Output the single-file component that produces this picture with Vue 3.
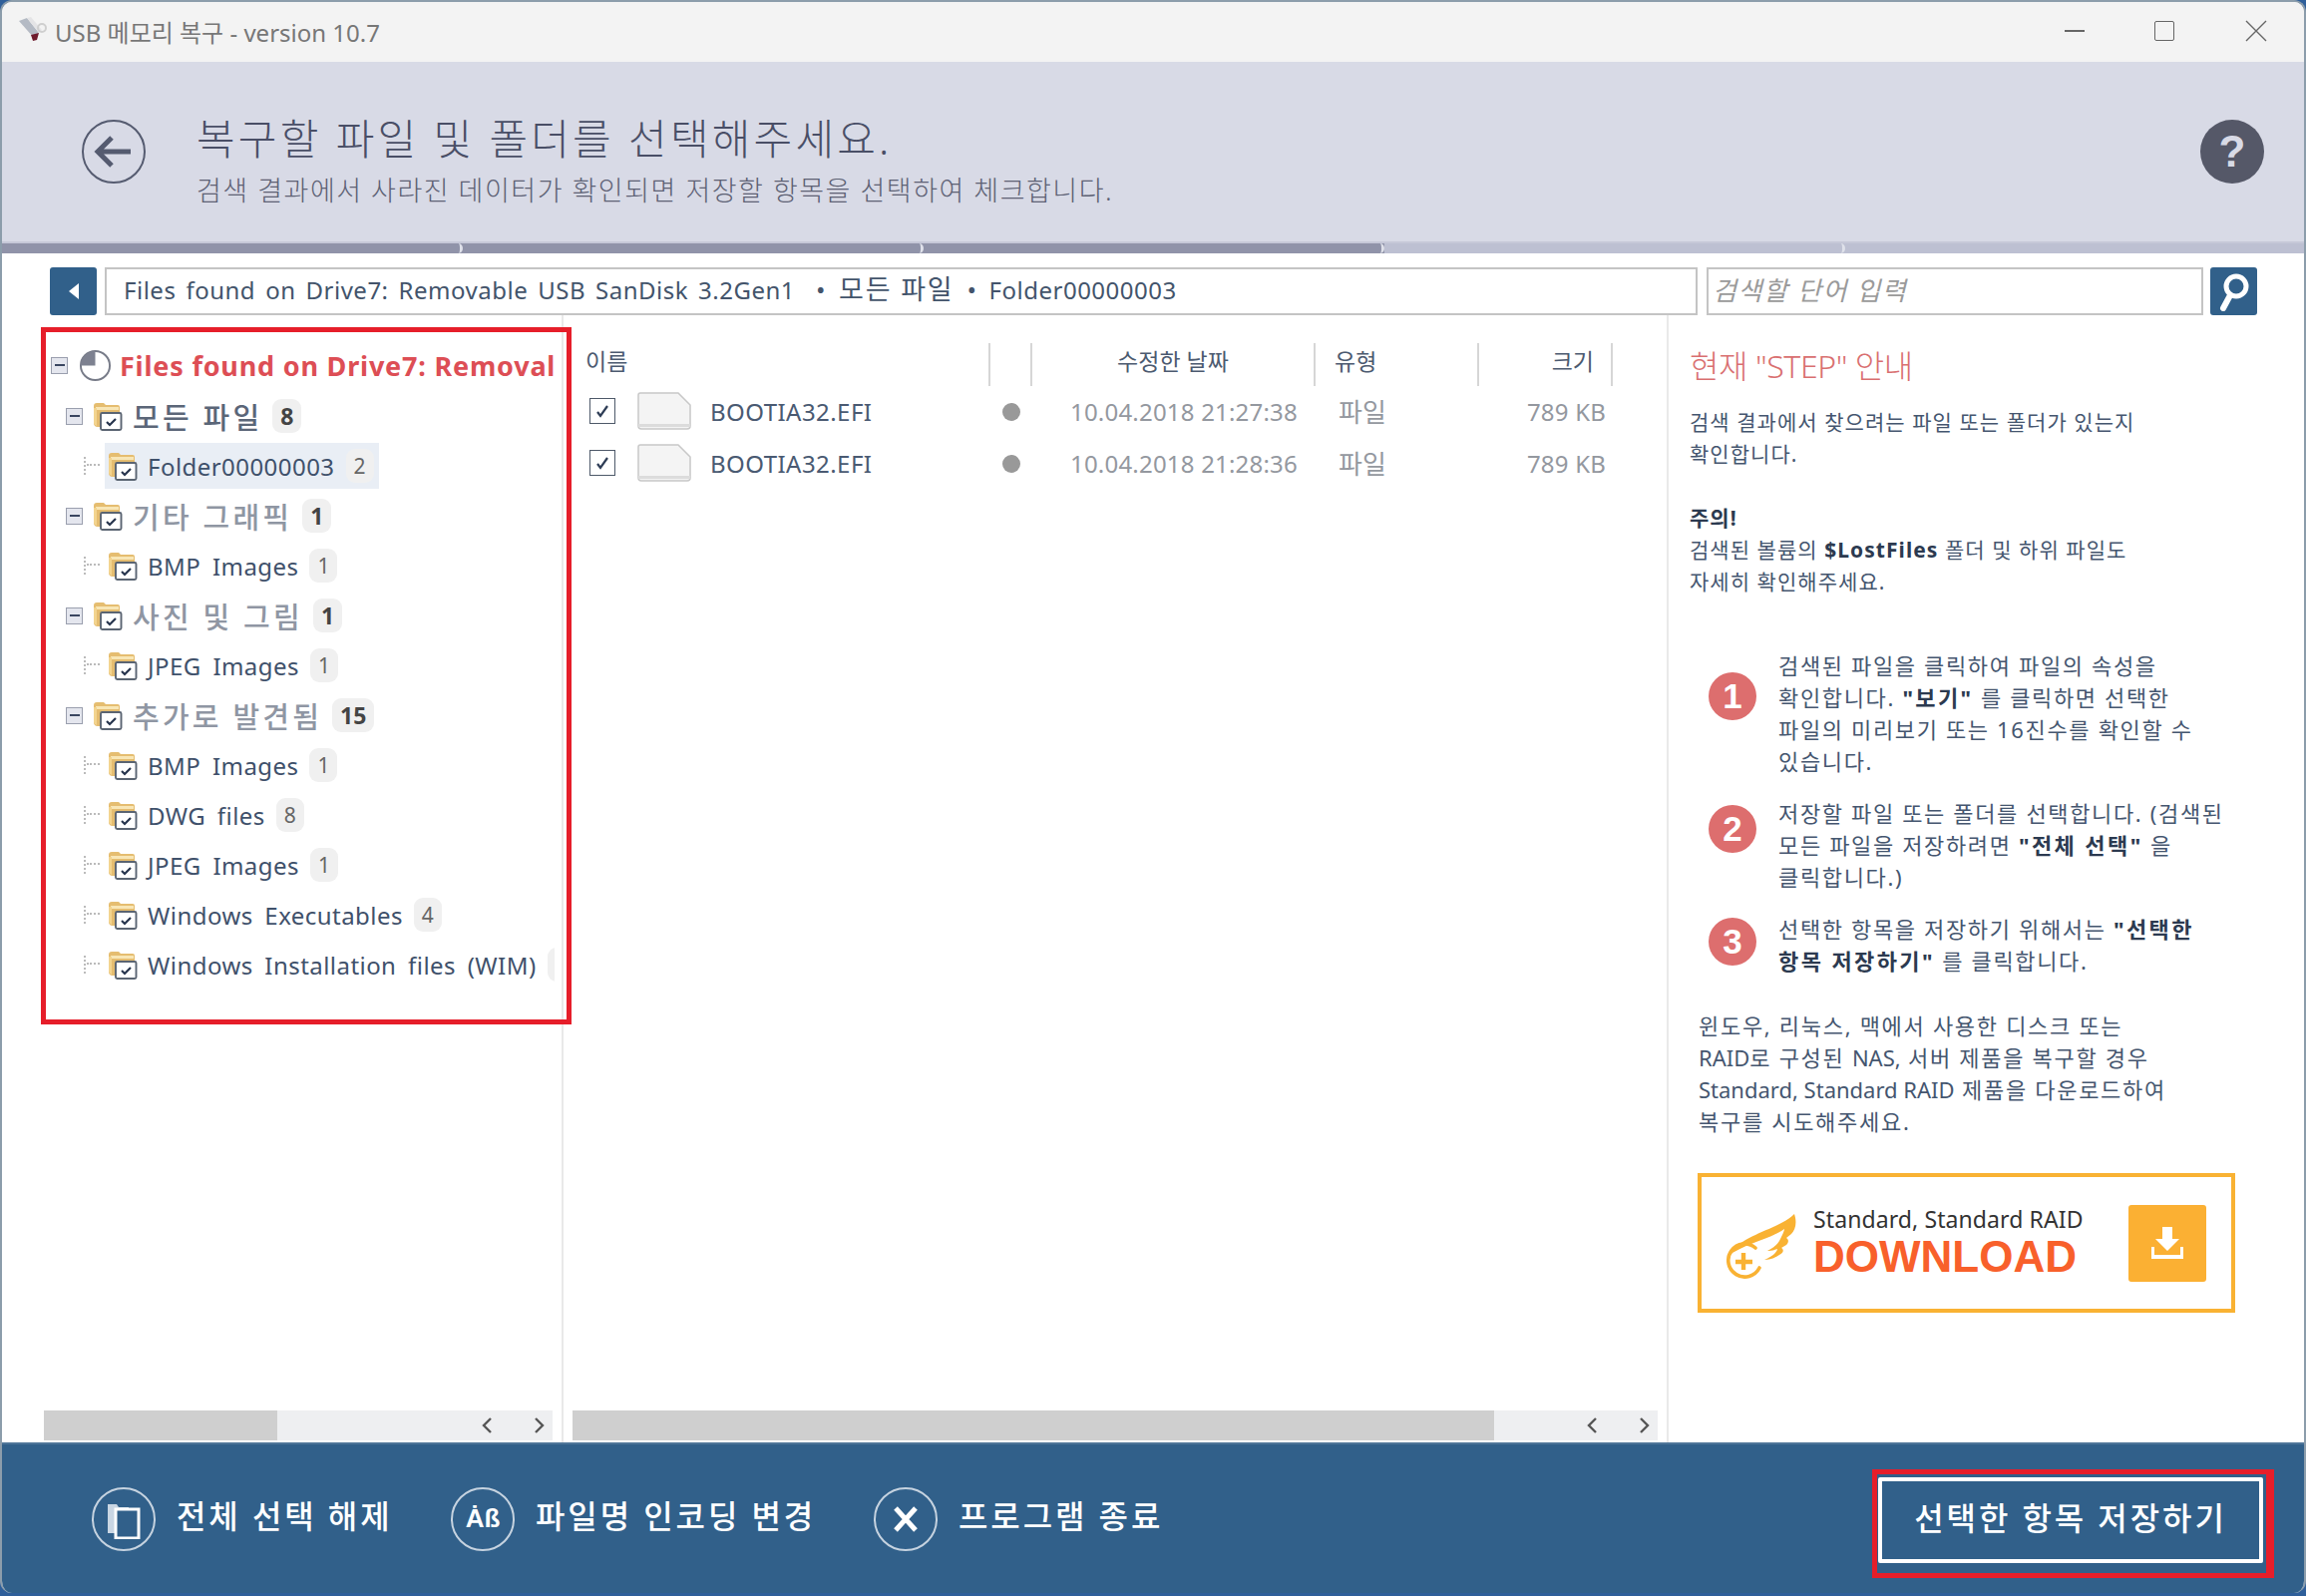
<script setup>
const tree = [
  { level: 1, label: '모든 파일', count: 8, tone: 'dark' },
  { level: 2, label: 'Folder00000003', count: 2, selected: true },
  { level: 1, label: '기타 그래픽', count: 1 },
  { level: 2, label: 'BMP Images', count: 1 },
  { level: 1, label: '사진 및 그림', count: 1 },
  { level: 2, label: 'JPEG Images', count: 1 },
  { level: 1, label: '추가로 발견됨', count: 15 },
  { level: 2, label: 'BMP Images', count: 1 },
  { level: 2, label: 'DWG files', count: 8 },
  { level: 2, label: 'JPEG Images', count: 1 },
  { level: 2, label: 'Windows Executables', count: 4 },
  { level: 2, label: 'Windows Installation files (WIM)', count: 1 }
]
const files = [
  { name: 'BOOTIA32.EFI', date: '10.04.2018 21:27:38', type: '파일', size: '789 KB' },
  { name: 'BOOTIA32.EFI', date: '10.04.2018 21:28:36', type: '파일', size: '789 KB' }
]
const steps = [1, 2, 3]
</script>

<template>
  <div class="window">
    <div class="titlebar">
      <svg class="appicon" width="50" height="50" viewBox="0 0 50 50">
        <path d="M9 14l8-3 12 15-5 5z" fill="#b4bac4" />
        <path d="M17 11l4-1 11 13-3 3z" fill="#e4e4e6" />
        <path d="M21 28l8-2-2 7-4 1z" fill="#6e1a2c" />
        <circle cx="32" cy="21" r="4" fill="none" stroke="#cfcfcf" stroke-width="2" />
      </svg>
      <span class="apptitle">USB 메모리 복구 - version 10.7</span>
      <div class="winctl">
        <i class="min"></i>
        <i class="max"></i>
        <svg width="24" height="22" viewBox="0 0 24 22"><path d="M2 1l20 20M22 1L2 21" stroke="#666" stroke-width="1.4" fill="none" /></svg>
      </div>
    </div>

    <header class="header">
      <div class="round back">
        <svg width="40" height="34" viewBox="0 0 40 34"><path d="M18 3L4 17l14 14M5 17h32" fill="none" stroke="#555b70" stroke-width="5" /></svg>
      </div>
      <div class="heading">
        <h1>복구할 파일 및 폴더를 선택해주세요.</h1>
        <p>검색 결과에서 사라진 데이터가 확인되면 저장할 항목을 선택하여 체크합니다.</p>
      </div>
      <div class="round help">?</div>
    </header>

    <div class="progress">
      <span class="seg done s1"></span><span class="seg done s2"></span><span class="seg done s3"></span><span class="seg s4"></span><span class="seg s5"></span>
    </div>

    <div class="toolbar">
      <div class="navbtn">
        <svg width="14" height="20" viewBox="0 0 14 20"><path d="M12 2v16L2 10z" fill="#fff" /></svg>
      </div>
      <div class="path"><span class="lat">Files found on Drive7: Removable USB SanDisk 3.2Gen1</span><b class="sep first">•</b><span class="ko">모든 파일</span><b class="sep">•</b><span>Folder00000003</span></div>
      <div class="search">검색할 단어 입력</div>
      <div class="navbtn go">
        <svg width="34" height="40" viewBox="0 0 34 40"><circle cx="19" cy="15" r="10" fill="none" stroke="#fff" stroke-width="5" /><path d="M13 24L6 37" stroke="#fff" stroke-width="6" stroke-linecap="round" /></svg>
      </div>
    </div>

    <main class="main">
      <section class="treepanel">
        <div class="mark"></div>
        <div class="tree">
          <div class="node root">
            <span class="exp"></span>
            <svg class="pie" width="33" height="33" viewBox="0 0 34 34">
              <circle cx="17" cy="17" r="15" fill="#fff" stroke="#777b88" stroke-width="2" />
              <path d="M17 17V2A15 15 0 0 0 2 17z" fill="#7d8190" />
            </svg>
            <span class="rootlabel">Files found on Drive7: Removal</span>
          </div>
          <div v-for="(n, i) in tree" :key="i" class="node" :class="'l' + n.level">
            <span v-if="n.level === 1" class="exp"></span>
            <span v-else class="dots"></span>
            <div class="item" :class="{ sel: n.selected }">
              <svg class="folder" width="30" height="30" viewBox="0 0 30 30">
                <path d="M1 5q0-3 3-3h7l2 2h12q2 0 2 2v20H5q-4 0-4-4z" fill="#e5bd70" />
                <path d="M3 6h23v3H3z" fill="#f8e6b5" />
                <path d="M1 7h3v18q-3-1-3-3z" fill="#f3d48f" />
                <rect x="8" y="12" width="20.5" height="17" rx="1.5" fill="#fff" stroke="#5a6472" stroke-width="1.9" />
                <path d="M14 21l3 3 6-6" fill="none" stroke="#26344d" stroke-width="2.2" />
              </svg>
              <span class="label" :class="n.tone">{{ n.label }}</span>
              <span class="count">{{ n.count }}</span>
            </div>
          </div>
        </div>
        <div class="hscroll tree-scroll">
          <span class="thumb"></span>
          <span class="arrows"><svg width="12" height="18" viewBox="0 0 12 18"><path d="M10 2L3 9l7 7" fill="none" stroke="#555" stroke-width="2.4" /></svg><svg width="12" height="18" viewBox="0 0 12 18"><path d="M2 2l7 7-7 7" fill="none" stroke="#555" stroke-width="2.4" /></svg></span>
        </div>
      </section>

      <section class="listpanel">
        <div class="table">
          <div class="thead">
            <span class="th c1">이름</span><span class="th c2"></span><span class="th c3">수정한 날짜</span><span class="th c4">유형</span><span class="th c5">크기</span>
          </div>
          <div v-for="(f, i) in files" :key="i" class="tr">
            <span class="td c1">
              <span class="chk"><svg width="14" height="14" viewBox="0 0 14 14"><path d="M2 8l3 4 7-10" fill="none" stroke="#2d3c55" stroke-width="2.2" /></svg></span>
              <svg class="fileicon" width="54" height="38" viewBox="0 0 54 38">
                <path d="M3 1h38l12 12v21q0 3-3 3H4q-3 0-3-3V3q0-2 2-2z" fill="#f4f4f4" stroke="#c8c8c8" stroke-width="1.5" />
                <path d="M1 32h52v3H1z" fill="#dcdcdc" />
              </svg>
              <span class="fname">{{ f.name }}</span>
            </span>
            <span class="td c2"><i class="dot"></i></span>
            <span class="td c3">{{ f.date }}</span>
            <span class="td c4">{{ f.type }}</span>
            <span class="td c5">{{ f.size }}</span>
          </div>
        </div>
        <div class="hscroll list-scroll">
          <span class="thumb"></span>
          <span class="arrows"><svg width="12" height="18" viewBox="0 0 12 18"><path d="M10 2L3 9l7 7" fill="none" stroke="#555" stroke-width="2.4" /></svg><svg width="12" height="18" viewBox="0 0 12 18"><path d="M2 2l7 7-7 7" fill="none" stroke="#555" stroke-width="2.4" /></svg></span>
        </div>
      </section>

      <aside class="guide">
        <h2>현재 "STEP" 안내</h2>
        <p class="txt">검색 결과에서 찾으려는 파일 또는 폴더가 있는지<br />확인합니다.</p>
        <p class="txt warn"><b>주의!</b><br />검색된 볼륨의 <b>$LostFiles</b> 폴더 및 하위 파일도<br />자세히 확인해주세요.</p>
        <div class="step s-1">
          <span class="num">{{ steps[0] }}</span>
          <p class="txt">검색된 파일을 클릭하여 파일의 속성을<br />확인합니다. <b>"보기"</b> 를 클릭하면 선택한<br />파일의 미리보기 또는 16진수를 확인할 수<br />있습니다.</p>
        </div>
        <div class="step s-2">
          <span class="num">{{ steps[1] }}</span>
          <p class="txt">저장할 파일 또는 폴더를 선택합니다. (검색된<br />모든 파일을 저장하려면 <b>"전체 선택"</b> 을<br />클릭합니다.)</p>
        </div>
        <div class="step s-3">
          <span class="num">{{ steps[2] }}</span>
          <p class="txt">선택한 항목을 저장하기 위해서는 <b>"선택한<br />항목 저장하기"</b> 를 클릭합니다.</p>
        </div>
        <p class="txt para">윈도우, 리눅스, 맥에서 사용한 디스크 또는<br /><span class="nar">RAID</span>로 구성된 <span class="nar">NAS,</span> 서버 제품을 복구할 경우<br /><span class="nar">Standard, Standard RAID</span> 제품을 다운로드하여<br />복구를 시도해주세요.</p>
        <div class="promo">
          <svg class="wing" width="110" height="100" viewBox="0 0 110 100">
            <path d="M45 55A16.500 16.500 0 1 0 49 75" fill="none" stroke="#f9b233" stroke-width="3.600" stroke-linecap="round" />
            <path d="M33 60v17M25 69h17" stroke="#f9b233" stroke-width="4.400" />
            <path d="M17 63C28 46 54 39 71 30c6-3 10-6 13-9 3 9 1 16-3 20l-5 4c3 2 2 5 0 7l-5 3c3 2 2 5-2 7-4 3-9 5-15 5 6-3 12-6 13-11-5 2-7 2-10 2 6-3 11-7 13-12 2-4 4-8 4-10C60 46 36 50 17 63z" fill="#f9b233" />
          </svg>
          <div class="promotxt">
            <span class="ptop">Standard, Standard RAID</span>
            <span class="pbig">DOWNLOAD</span>
          </div>
          <div class="dl">
            <svg width="36" height="36" viewBox="0 0 36 36">
              <path d="M13 2h10v12h7L18 26 6 14h7z" fill="#fff" />
              <path d="M2 22v12h32V22h-3v8H5v-8z" fill="#fff" />
            </svg>
          </div>
        </div>
      </aside>
    </main>

    <footer class="footer">
      <div class="act">
        <span class="ring">
          <svg width="36" height="40" viewBox="0 0 36 40">
            <path d="M2 5h9l2 3h10v26H2z" fill="#c9d6e3" />
            <rect x="10" y="10" width="23" height="29" fill="#31608a" stroke="#fff" stroke-width="3" />
          </svg>
        </span>
        <span class="actlabel">전체 선택 해제</span>
      </div>
      <div class="act a2">
        <span class="ring"><span class="ab">Ȧß</span></span>
        <span class="actlabel">파일명 인코딩 변경</span>
      </div>
      <div class="act a3">
        <span class="ring">
          <svg width="28" height="28" viewBox="0 0 28 28"><path d="M4 3l20 22M24 3L4 25" stroke="#fff" stroke-width="5" /></svg>
        </span>
        <span class="actlabel">프로그램 종료</span>
      </div>
      <button class="save">선택한 항목 저장하기</button>
    </footer>
  </div>
</template>

<style>
html, body { margin: 0; padding: 0; background: #2f5f9a; }
</style>

<style scoped>
* { box-sizing: border-box; }
.window {
  width: 2312px;
  height: 1597px;
  display: flex;
  flex-direction: column;
  background: #fff;
  border: 2px solid #8c9dab;
  border-bottom: 0;
  border-radius: 12px;
  overflow: hidden;
  font-family: "Noto Sans", "Noto Sans CJK KR", sans-serif;
  color: #3f516b;
}
.titlebar {
  height: 60px;
  flex: none;
  display: flex;
  align-items: center;
  background: #f3f3f3;
  padding-left: 8px;
}
.appicon { margin-right: -5px; }
.apptitle { font-size: 24px; color: #777; padding-bottom: 2px; letter-spacing: 0; }
.winctl {
  margin-left: auto;
  display: flex;
  align-items: center;
  gap: 70px;
  padding: 0 36px 2px 0;
}
.min { width: 20px; height: 2px; background: #666; display: block; }
.max { width: 20px; height: 20px; border: 1.5px solid #666; border-radius: 2px; display: block; }

.header {
  height: 180px;
  flex: none;
  display: flex;
  align-items: center;
  background: #d8dae6;
  padding: 0 40px 0 80px;
}
.round {
  width: 64px;
  height: 64px;
  border-radius: 50%;
  flex: none;
  display: flex;
  align-items: center;
  justify-content: center;
}
.back { border: 2px solid #555b70; }
.help {
  margin-left: auto;
  background: #555868;
  color: #d8dae6;
  font: bold 44px "Liberation Sans", sans-serif;
}
.heading { margin-left: 51px; padding-top: 16px; }
h1 {
  margin: 0;
  font-size: 42px;
  line-height: 52px;
  font-weight: 300;
  letter-spacing: 3.2px;
  color: #494e66;
}
.heading p {
  margin: 9px 0 0;
  font-size: 27px;
  line-height: 34px;
  letter-spacing: 1.5px;
  color: #5d6174;
  font-weight: 300;
}

.progress {
  height: 12px;
  flex: none;
  display: flex;
  background: #bdc0d2;
  border-top: 2px solid #c6c8d8;
}
.seg { position: relative; display: block; height: 100%; background: #bdc0d2; }
.seg.done { background: #9093a9; }
.seg::after {
  content: "";
  position: absolute;
  right: 0;
  top: 0;
  bottom: 0;
  width: 6px;
  border-right: 3px solid #dfe1ea;
  border-radius: 0 50% 50% 0;
}
.s1, .s2, .s3, .s4 { width: 462px; }
.s5 { flex: 1; }
.s5::after { display: none; }

.toolbar {
  height: 62px;
  flex: none;
  display: flex;
  align-items: flex-end;
  padding-left: 48px;
  gap: 8px;
}
.navbtn {
  width: 47px;
  height: 48px;
  flex: none;
  background: #31608a;
  border-radius: 3px;
  display: flex;
  align-items: center;
  justify-content: center;
}
.path, .search {
  height: 48px;
  flex: none;
  border: 2px solid #c4c4c4;
  display: flex;
  align-items: center;
  font-size: 24px;
  white-space: pre;
  padding-bottom: 4px;
}
.path { width: 1597px; padding-left: 17px; color: #43546b; letter-spacing: 0.5px; }
.lat { word-spacing: 3.300px; }
.ko { font-size: 27px; line-height: 30px; letter-spacing: 1.8px; margin-left: 2px; }
.sep { font-size: 20px; margin: 0 13px 0 14px; }
.sep.first { margin: 0 12px 0 22px; }
.search { width: 498px; padding-left: 4px; color: #9a9a9a; font-style: italic; margin-left: 1px; font-size: 26px; letter-spacing: 1.6px; }
.go { margin-left: -1px; }

.main { flex: 1; min-height: 0; display: flex; }

.treepanel {
  position: relative;
  width: 563px;
  flex: none;
  display: flex;
  flex-direction: column;
  border-right: 2px solid #e9e9e9;
}
.mark {
  position: absolute;
  left: 39px;
  top: 12px;
  width: 532px;
  height: 699px;
  border: 5px solid #e61e2a;
  z-index: 2;
  pointer-events: none;
}
.tree {
  flex: 1;
  min-height: 0;
  margin-right: 7px;
  padding-top: 26px;
  overflow: hidden;
}
.node {
  height: 50px;
  display: flex;
  align-items: center;
  white-space: nowrap;
}
.root { padding-left: 49px; padding-bottom: 1px; }
.l1 { padding-left: 64px; }
.l2 { padding-left: 82px; }
.exp {
  position: relative;
  width: 17px;
  height: 17px;
  flex: none;
  border: 1.5px solid #9a9fae;
  background: #e4e6ee;
}
.exp::after {
  content: "";
  position: absolute;
  left: 2.5px;
  right: 2.5px;
  top: 6px;
  height: 2px;
  background: #3a4660;
}
.dots {
  position: relative;
  width: 16px;
  height: 18px;
  flex: none;
  border-left: 2px dotted #bbb;
}
.dots::after {
  content: "";
  position: absolute;
  left: 1px;
  right: 0;
  top: 7px;
  border-top: 2px dotted #bbb;
}
.pie { margin-left: 11px; margin-right: 8px; flex: none; }
.rootlabel {
  font-size: 27px;
  font-weight: 700;
  color: #dd4e55;
  letter-spacing: 0.8px;
}
.item {
  display: flex;
  align-items: center;
  height: 46px;
  min-width: 0;
}
.l1 .item { margin-left: 10px; }
.l2 .item { margin-left: 5px; padding: 0 12px 0 3px; }
.item.sel { background: #e9eef5; width: 275px; }
.folder { flex: none; }
.label { color: #3f516b; }
.l1 .label {
  margin-left: 10px;
  font-size: 29px;
  font-weight: 500;
  letter-spacing: 3.2px;
  color: #8f96a3;
}
.l1 .label.dark { color: #5b6678; }
.l2 .label { margin-left: 10px; font-size: 24px; letter-spacing: 0.45px; word-spacing: 5px; }
.count {
  flex: none;
  margin-left: 11px;
  min-width: 25px;
  height: 34px;
  padding: 0 8px;
  border-radius: 9px;
  background: #f0f0f0;
  display: flex;
  align-items: center;
  justify-content: center;
  color: #666;
  font-size: 21px;
}
.l1 .count { margin-left: 10px; font-weight: 700; font-size: 23px; color: #444; }

.hscroll {
  height: 30px;
  flex: none;
  display: flex;
  align-items: stretch;
  background: #eeeff1;
  margin-bottom: 2px;
}
.thumb { display: block; background: #cfcfcf; }
.arrows {
  margin-left: auto;
  display: flex;
  align-items: center;
  gap: 41px;
  padding-right: 7px;
}
.tree-scroll { margin: 0 9px 2px 42px; }
.tree-scroll .thumb { width: 234px; }
.listpanel {
  width: 1108px;
  flex: none;
  display: flex;
  flex-direction: column;
  border-right: 2px solid #e9e9e9;
}
.list-scroll { margin: 0 9px 2px 9px; }
.list-scroll .thumb { width: 924px; }

.table { flex: 1; padding: 28px 0 0 9px; }
.thead, .tr {
  display: grid;
  grid-template-columns: 419px 42px 284px 164px 134px;
}
.thead { height: 43px; }
.th {
  display: flex;
  align-items: center;
  border-right: 2px solid #d6d6d6;
  font-size: 23px;
  color: #4c5a70;
  padding-bottom: 9px;
}
.th.c1 { padding-left: 13px; }
.th.c3 { justify-content: center; }
.th.c4 { padding-left: 19px; }
.th.c5 { justify-content: flex-end; padding-right: 17px; }
.tr { height: 52px; }
.td {
  display: flex;
  align-items: center;
  font-size: 24px;
  letter-spacing: 0.2px;
  color: #94989f;
  white-space: nowrap;
  padding-bottom: 2px;
}
.td.c1 { padding-left: 17px; }
.td.c2 { justify-content: center; padding-bottom: 0; }
.td.c3 { padding-left: 38px; }
.td.c4 { padding-left: 23px; font-size: 26px; }
.td.c5 { justify-content: flex-end; padding-right: 7px; }
.chk {
  width: 26px;
  height: 26px;
  border: 1.5px solid #4e5969;
  display: flex;
  align-items: center;
  justify-content: center;
}
.fileicon { margin-left: 22px; }
.fname { margin-left: 19px; color: #4a5a72; letter-spacing: 0.45px; }
.dot { width: 18px; height: 18px; border-radius: 50%; background: #999; display: block; }

.guide {
  flex: 1;
  padding: 26px 0 0 21px;
  white-space: nowrap;
}
h2 {
  margin: 0 0 15px;
  font-size: 32px;
  line-height: 50px;
  font-weight: 300;
  letter-spacing: -0.4px;
  color: #d96f70;
}
.txt {
  margin: 0;
  font-size: 21px;
  line-height: 32px;
  letter-spacing: 1.05px;
  color: #45566f;
}
.txt b { color: #2c3a50; }
.warn { margin-top: 32px; }
.step { display: flex; align-items: flex-start; padding-left: 19px; }
.step .txt { font-size: 22px; letter-spacing: 1.65px; }
.step .txt b { letter-spacing: 2.4px; }
.s-1 { margin-top: 52px; }
.s-2 { margin-top: 20px; }
.s-3 { margin-top: 20px; }
.num {
  width: 48px;
  height: 48px;
  margin-right: 22px;
  border-radius: 50%;
  flex: none;
  background: #dd6e6e;
  color: #fff;
  display: flex;
  align-items: center;
  justify-content: center;
  font: bold 35px "Liberation Sans", sans-serif;
}
.s-1 .num { margin-top: 23px; }
.s-2 .num { margin-top: 8px; }
.s-3 .num { margin-top: 5px; }
.para { margin: 33px 0 0 9px; font-size: 22px; letter-spacing: 1.7px; }
.nar { letter-spacing: 0; }
.promo {
  margin: 36px 0 0 8px;
  width: 539px;
  height: 140px;
  border: 4px solid #f9b233;
  display: flex;
  align-items: center;
  padding-left: 9px;
}
.wing { flex: none; }
.promotxt { margin-left: -7px; display: flex; flex-direction: column; width: 316px; }
.ptop { font-size: 23px; line-height: 28px; color: #333; letter-spacing: 0.1px; }
.pbig {
  font: bold 44px/48px "Liberation Sans", sans-serif;
  color: #f8602b;
}
.dl {
  width: 78px;
  height: 77px;
  border-radius: 3px;
  background: #fbb033;
  display: flex;
  align-items: center;
  justify-content: center;
}

.footer {
  height: 151px;
  flex: none;
  display: flex;
  align-items: center;
  background: #31608a;
  border-top: 2px solid #4f7699;
  padding-left: 90px;
  color: #fff;
  position: relative;
}
.act {
  display: flex;
  align-items: center;
  font-size: 32px;
  font-weight: 500;
  letter-spacing: 2.9px;
  width: 360px;
  white-space: nowrap;
}
.actlabel { padding-bottom: 9px; }
.a2 { width: 424px; }
.a3 { width: 300px; }
.ring {
  width: 64px;
  height: 64px;
  margin-right: 21px;
  border: 2.5px solid #c6d3e0;
  border-radius: 50%;
  flex: none;
  display: flex;
  align-items: center;
  justify-content: center;
}
.ab { font: bold 26px "Liberation Sans", sans-serif; letter-spacing: 0; }
.save {
  position: relative;
  margin-left: auto;
  margin-right: 41px;
  margin-top: 2px;
  width: 386px;
  height: 86px;
  padding: 0 0 8px;
  background: transparent;
  border: 4px solid #fff;
  border-radius: 2px;
  color: #fff;
  font-family: "Noto Sans", "Noto Sans CJK KR", sans-serif;
  font-size: 32px;
  font-weight: 500;
  letter-spacing: 2.9px;
}
.save::after {
  content: "";
  position: absolute;
  left: -10px;
  right: -15px;
  top: -12px;
  bottom: -19px;
  border: 5px solid #e61e2a;
  border-right-width: 8px;
}
</style>
